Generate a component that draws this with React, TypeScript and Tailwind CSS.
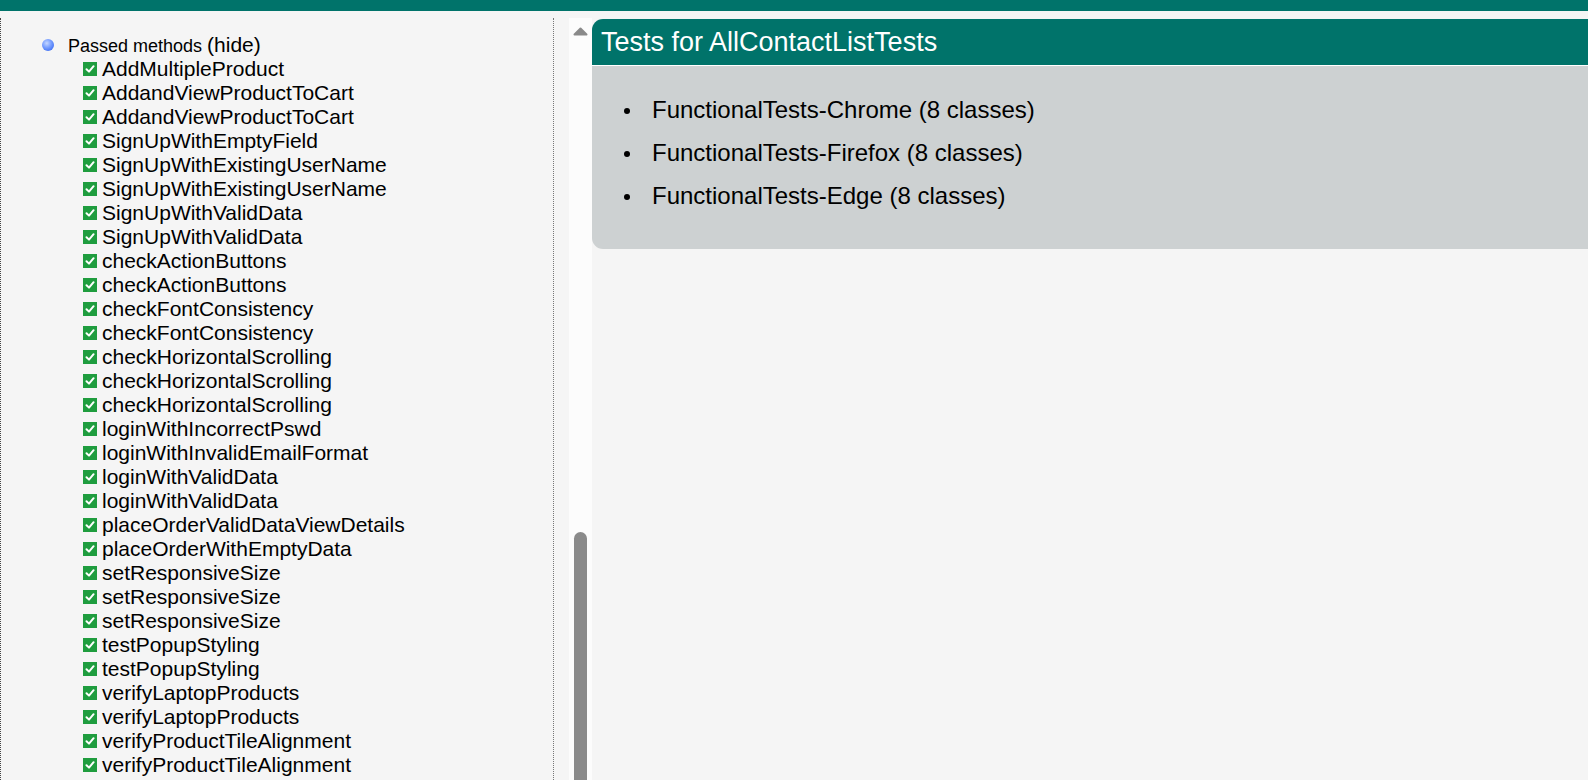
import * as React from "react";

const methods = [
  "AddMultipleProduct",
  "AddandViewProductToCart",
  "AddandViewProductToCart",
  "SignUpWithEmptyField",
  "SignUpWithExistingUserName",
  "SignUpWithExistingUserName",
  "SignUpWithValidData",
  "SignUpWithValidData",
  "checkActionButtons",
  "checkActionButtons",
  "checkFontConsistency",
  "checkFontConsistency",
  "checkHorizontalScrolling",
  "checkHorizontalScrolling",
  "checkHorizontalScrolling",
  "loginWithIncorrectPswd",
  "loginWithInvalidEmailFormat",
  "loginWithValidData",
  "loginWithValidData",
  "placeOrderValidDataViewDetails",
  "placeOrderWithEmptyData",
  "setResponsiveSize",
  "setResponsiveSize",
  "setResponsiveSize",
  "testPopupStyling",
  "testPopupStyling",
  "verifyLaptopProducts",
  "verifyLaptopProducts",
  "verifyProductTileAlignment",
  "verifyProductTileAlignment",
];

const suites = [
  "FunctionalTests-Chrome (8 classes)",
  "FunctionalTests-Firefox (8 classes)",
  "FunctionalTests-Edge (8 classes)",
];

function PassIcon() {
  return (
    <svg width="14" height="14" viewBox="0 0 14 14" className="shrink-0">
      <rect x="0" y="0" width="14" height="14" fill="#1f9d3f" />
      <path
        d="M3.5 7.2 L6 9.6 L10.6 4.2"
        fill="none"
        stroke="#ffffff"
        strokeWidth="2"
        strokeLinecap="round"
        strokeLinejoin="round"
      />
    </svg>
  );
}

function BlueBullet() {
  return (
    <svg width="12" height="12" viewBox="0 0 12 12" className="shrink-0">
      <defs>
        <radialGradient id="ball" cx="0.4" cy="0.35" r="0.65">
          <stop offset="0" stopColor="#c4d6ff" />
          <stop offset="0.55" stopColor="#7aa0ff" />
          <stop offset="1" stopColor="#4a78f5" />
        </radialGradient>
      </defs>
      <circle cx="6" cy="6" r="6" fill="url(#ball)" />
    </svg>
  );
}

function ArrowUp() {
  return (
    <svg width="15" height="9" viewBox="0 0 15 9" className="shrink-0">
      <path
        d="M7.5 1.5 L13.5 7.5 L1.5 7.5 Z"
        fill="#8a8a8a"
        stroke="#8a8a8a"
        strokeWidth="2"
        strokeLinejoin="round"
      />
    </svg>
  );
}

export default function App() {
  return (
    <div className="w-full h-screen overflow-hidden bg-[#f5f5f5] font-['Liberation_Sans',Arial,sans-serif] text-black flex flex-col">
      <div className="h-[11px] shrink-0 bg-[#00736a]" />

      <div className="flex flex-1 pt-[7px] min-h-0">
        {/* left frame */}
        <div className="w-[554px] shrink-0 border-l border-dotted border-l-[#444] border-r border-r-[#777] pt-[15px]">
          <div className="flex items-center pl-[41px] h-[24px]">
            <BlueBullet />
            <span className="ml-[14px] text-[18px] leading-[24px]">
              Passed methods <span className="text-[21px]">(hide)</span>
            </span>
          </div>
          <div className="flex flex-col">
            {methods.map((m, i) => (
              <div
                key={i}
                className="flex items-center pl-[82px] h-[24px] text-[21px] leading-[24px]"
              >
                <PassIcon />
                <span className="ml-[5px]">{m}</span>
              </div>
            ))}
          </div>
        </div>

        {/* scrollbar */}
        <div className="ml-[15px] w-[23px] shrink-0 bg-[#fcfcfc] flex flex-col items-center">
          <div className="mt-[9px]">
            <ArrowUp />
          </div>
          <div className="mt-auto w-[13px] h-[248px] rounded-t-full bg-[#8a8a8a]" />
        </div>

        {/* right frame */}
        <div className="flex-1 pt-[1px] min-w-0">
          <div className="h-[46px] bg-[#00736a] rounded-tl-[11px] border-b border-white flex items-center pl-[9px] box-content">
            <span className="text-white text-[27px] leading-none">
              Tests for AllContactListTests
            </span>
          </div>
          <div className="bg-[#cdd1d2] rounded-bl-[11px] pt-[22px] pb-[32px]">
            {suites.map((s, i) => (
              <div
                key={i}
                className="flex items-center h-[43px] text-[24px] leading-[43px]"
              >
                <span className="ml-[32px] w-[6px] h-[6px] rounded-full bg-black shrink-0 mt-[2px]" />
                <span className="ml-[22px]">{s}</span>
              </div>
            ))}
          </div>
        </div>
      </div>
    </div>
  );
}
